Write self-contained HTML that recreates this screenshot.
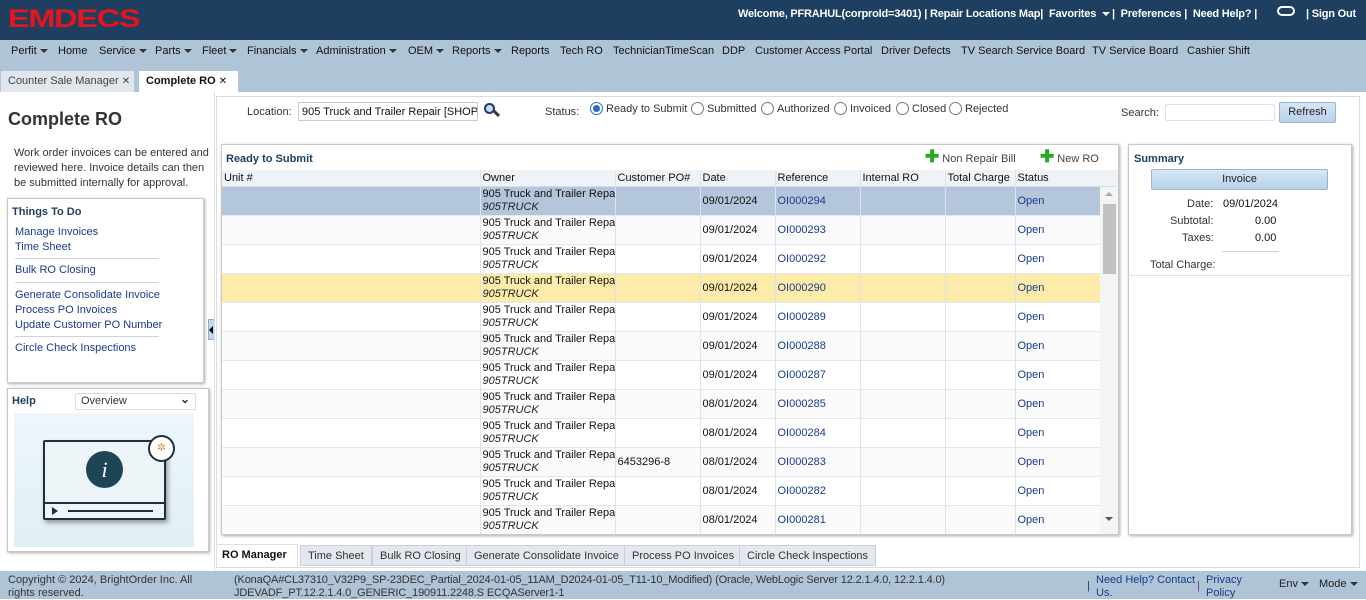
<!DOCTYPE html>
<html><head><meta charset="utf-8"><style>
*{box-sizing:border-box;margin:0;padding:0}
body{width:1366px;height:599px;overflow:hidden;font-family:"Liberation Sans",Tahoma,sans-serif;font-size:11px;color:#333;background:#fff;position:relative}
.a{position:absolute;white-space:nowrap}
#hdr{left:0;top:0;width:1366px;height:40px;background:#1e3f5f}
#nav{left:0;top:40px;width:1366px;height:52px;background:#b0c4d8}
#foot{left:0;top:571px;width:1366px;height:28px;background:#b0c4d8}
.nv{top:45px;font-size:11px;color:#111}
.tri{display:inline-block;width:0;height:0;border-left:4px solid transparent;border-right:4px solid transparent;border-top:4px solid #333;vertical-align:middle;margin-left:3px}
.wt{color:#fff;font-weight:bold;top:8px;font-size:11px;letter-spacing:-0.2px}
a,.lk{color:#1a3a8a}
.box{border:1px solid #c8c8c8;box-shadow:1px 1px 3px #aaa;background:#fff}
table{border-collapse:collapse;table-layout:fixed}
td,th{border-right:1px solid #dde3ea;padding:0 2px;font-weight:normal;text-align:left;overflow:hidden;white-space:nowrap;color:#111}
th{height:16px;background:#eef3f8;border-bottom:1px solid #d5dde6}
td{height:29px;border-bottom:1px solid #e4e8ec;vertical-align:middle}
tr.s td{background:#b4c6dc}
tr.y td{background:#fdeca9}
tr.g td{background:#fafafa}
.st{color:#1a3a8a}
.ow{line-height:13px}
.ow i{display:block;color:#222}
.bt{top:545px;height:21px;padding:4px 7px;border:1px solid #ccd;background:#e3e8ee;color:#333}
</style></head><body>
<div id="hdr" class="a"></div>
<div class="a" style="left:8px;top:5px;font-size:25px;font-weight:bold;color:#e8141c;letter-spacing:-1px;transform:scaleX(1.3);transform-origin:left">EMDECS</div>
<div class="a wt" style="left:738px">Welcome, PFRAHUL(corproId=3401) | Repair Locations Map|</div>
<div class="a wt" style="left:1049px">Favorites <span class="tri" style="border-top-color:#fff"></span></div>
<div class="a wt" style="left:1112px">| &nbsp;Preferences | &nbsp;Need Help? |</div>
<div class="a" style="left:1277px;top:6px;width:18px;height:10px;border:2px solid #fff;border-radius:5px"></div>
<div class="a wt" style="left:1306px">| Sign Out</div>
<div id="nav" class="a"></div>
<div class="a nv" style="left:11px">Perfit<span class="tri"></span></div>
<div class="a nv" style="left:58px">Home</div>
<div class="a nv" style="left:99px">Service<span class="tri"></span></div>
<div class="a nv" style="left:155px">Parts<span class="tri"></span></div>
<div class="a nv" style="left:202px">Fleet<span class="tri"></span></div>
<div class="a nv" style="left:247px">Financials<span class="tri"></span></div>
<div class="a nv" style="left:316px">Administration<span class="tri"></span></div>
<div class="a nv" style="left:408px">OEM<span class="tri"></span></div>
<div class="a nv" style="left:452px">Reports<span class="tri"></span></div>
<div class="a nv" style="left:511px">Reports</div>
<div class="a nv" style="left:560px">Tech RO</div>
<div class="a nv" style="left:613px">TechnicianTimeScan</div>
<div class="a nv" style="left:722px">DDP</div>
<div class="a nv" style="left:755px">Customer Access Portal</div>
<div class="a nv" style="left:881px">Driver Defects</div>
<div class="a nv" style="left:961px">TV Search Service Board</div>
<div class="a nv" style="left:1092px">TV Service Board</div>
<div class="a nv" style="left:1187px">Cashier Shift</div>
<div class="a" style="left:1px;top:71px;width:133px;height:21px;background:#dfe6ee;padding:4px 7px;color:#444">Counter Sale Manager <span style="font-size:10px">✕</span></div>
<div class="a" style="left:139px;top:71px;width:99px;height:21px;background:#fff;padding:4px 7px;font-weight:bold;color:#111">Complete RO <span style="font-size:10px;font-weight:normal">✕</span></div>

<div class="a" style="left:8px;top:109px;font-size:18px;font-weight:bold;color:#333">Complete RO</div>
<div class="a" style="left:14px;top:146px;line-height:15px;white-space:normal;width:198px">Work order invoices can be entered and reviewed here. Invoice details can then be submitted internally for approval.</div>
<div class="a box" style="left:7px;top:198px;width:197px;height:185px"></div>
<div class="a" style="left:12px;top:206px;font-weight:bold;color:#1e3f5f">Things To Do</div>
<div class="a lk" style="left:15px;top:225px;line-height:15px">Manage Invoices<br>Time Sheet</div>
<div class="a" style="left:15px;top:258px;width:144px;border-top:1px solid #ccd5df"></div>
<div class="a lk" style="left:15px;top:264px">Bulk RO Closing</div>
<div class="a" style="left:15px;top:282px;width:144px;border-top:1px solid #ccd5df"></div>
<div class="a lk" style="left:15px;top:288px;line-height:15px">Generate Consolidate Invoice<br>Process PO Invoices<br>Update Customer PO Number</div>
<div class="a" style="left:15px;top:336px;width:144px;border-top:1px solid #ccd5df"></div>
<div class="a lk" style="left:15px;top:342px">Circle Check Inspections</div>
<div class="a" style="left:208px;top:319px;width:7px;height:21px;background:#c4d6ec;border:1px solid #9ab"></div>
<div class="a" style="left:209px;top:326px;border-top:4px solid transparent;border-bottom:4px solid transparent;border-right:4px solid #000"></div>
<div class="a" style="left:214px;top:92px;width:1px;height:479px;background:#ddd"></div>
<div class="a box" style="left:7px;top:388px;width:202px;height:164px"></div>
<div class="a" style="left:12px;top:395px;font-weight:bold;color:#1e3f5f">Help</div>
<div class="a" style="left:75px;top:393px;width:121px;height:17px;border:1px solid #ddd;border-radius:2px;padding:1px 5px;color:#333">Overview<span style="position:absolute;right:5px;top:-2px;font-weight:bold;font-size:12px">⌄</span></div>
<div class="a" style="left:14px;top:413px;width:180px;height:134px;background:linear-gradient(#eef6fb,#dff0f6)"></div>
<div class="a" style="left:43px;top:440px;width:123px;height:80px;border:2px solid #1d2f3c;border-radius:2px;background:#edf5f9;box-shadow:2px 3px 5px #999"></div>
<div class="a" style="left:44px;top:502px;width:121px;height:2px;background:#1d2f3c"></div>
<div class="a" style="left:52px;top:507px;border-top:4px solid transparent;border-bottom:4px solid transparent;border-left:6px solid #1d2f3c"></div>
<div class="a" style="left:68px;top:510px;width:85px;height:2px;background:#1d2f3c"></div>
<div class="a" style="left:86px;top:451px;width:37px;height:37px;border-radius:50%;background:#1d4556;color:#fff;font-style:italic;font-size:22px;text-align:center;line-height:37px;font-family:'Liberation Serif',serif">i</div>
<div class="a" style="left:148px;top:435px;width:27px;height:27px;border-radius:50%;border:2px solid #1d2f3c;background:#fff;color:#e78b3a;font-size:11px;text-align:center;line-height:22px">✲</div>

<div class="a" style="left:216px;top:96px;width:1144px;height:472px;border:1px solid #d8dde3"></div>
<div class="a" style="left:247px;top:106px">Location:</div>
<div class="a" style="left:298px;top:102px;width:180px;height:19px;border:1px solid #ccc;padding:3px 3px;overflow:hidden;color:#111">905 Truck and Trailer Repair [SHOP]</div>
<div class="a" style="left:484px;top:103px;width:11px;height:11px;border:2px solid #336;border-radius:50%;background:#bfe0f5"></div>
<div class="a" style="left:493px;top:112px;width:7px;height:3px;background:#335;transform:rotate(45deg)"></div>
<div class="a" style="left:545px;top:106px">Status:</div>
<div class="a" style="left:590px;top:102px;width:13px;height:13px;border:1px solid #2a6bc4;border-radius:50%"><div style="margin:2px;width:7px;height:7px;border-radius:50%;background:#2a6bc4"></div></div>
<div class="a" style="left:606px;top:103px">Ready to Submit</div>
<div class="a" style="left:691px;top:102px;width:13px;height:13px;border:1px solid #777;border-radius:50%"></div>
<div class="a" style="left:707px;top:103px">Submitted</div>
<div class="a" style="left:761px;top:102px;width:13px;height:13px;border:1px solid #777;border-radius:50%"></div>
<div class="a" style="left:777px;top:103px">Authorized</div>
<div class="a" style="left:834px;top:102px;width:13px;height:13px;border:1px solid #777;border-radius:50%"></div>
<div class="a" style="left:850px;top:103px">Invoiced</div>
<div class="a" style="left:896px;top:102px;width:13px;height:13px;border:1px solid #777;border-radius:50%"></div>
<div class="a" style="left:912px;top:103px">Closed</div>
<div class="a" style="left:949px;top:102px;width:13px;height:13px;border:1px solid #777;border-radius:50%"></div>
<div class="a" style="left:965px;top:103px">Rejected</div>
<div class="a" style="left:1121px;top:107px">Search:</div>
<div class="a" style="left:1165px;top:104px;width:110px;height:17px;border:1px solid #dde;border-radius:2px"></div>
<div class="a" style="left:1279px;top:102px;width:57px;height:21px;border:1px solid #9bb3cc;border-radius:2px;background:linear-gradient(#d6e6f5,#b9d1ea);text-align:center;line-height:19px;color:#222">Refresh</div>

<div class="a box" style="left:221px;top:144px;width:898px;height:391px;overflow:hidden">
<div style="position:absolute;left:4px;top:8px;font-weight:bold;color:#1e3f5f">Ready to Submit</div>
<div style="position:absolute;left:703px;top:6px;color:#444"><b style="color:#2a2;font-size:17px;line-height:12px">✚</b> Non Repair Bill</div>
<div style="position:absolute;left:818px;top:6px;color:#444"><b style="color:#2a2;font-size:17px;line-height:12px">✚</b> New RO</div>
<table style="position:absolute;left:0;top:25px;width:878px">
<colgroup><col style="width:258px"><col style="width:135px"><col style="width:85px"><col style="width:75px"><col style="width:85px"><col style="width:85px"><col style="width:70px"><col style="width:85px"></colgroup>
<tr><th>Unit #</th><th>Owner</th><th>Customer PO#</th><th>Date</th><th>Reference</th><th>Internal RO</th><th>Total Charge</th><th>Status</th></tr>
<tr class="s"><td></td><td class="ow">905 Truck and Trailer Repair<i>905TRUCK</i></td><td></td><td>09/01/2024</td><td class="st">OI000294</td><td></td><td></td><td class="st">Open</td></tr>
<tr class="g"><td></td><td class="ow">905 Truck and Trailer Repair<i>905TRUCK</i></td><td></td><td>09/01/2024</td><td class="st">OI000293</td><td></td><td></td><td class="st">Open</td></tr>
<tr><td></td><td class="ow">905 Truck and Trailer Repair<i>905TRUCK</i></td><td></td><td>09/01/2024</td><td class="st">OI000292</td><td></td><td></td><td class="st">Open</td></tr>
<tr class="y"><td></td><td class="ow">905 Truck and Trailer Repair<i>905TRUCK</i></td><td></td><td>09/01/2024</td><td class="st">OI000290</td><td></td><td></td><td class="st">Open</td></tr>
<tr><td></td><td class="ow">905 Truck and Trailer Repair<i>905TRUCK</i></td><td></td><td>09/01/2024</td><td class="st">OI000289</td><td></td><td></td><td class="st">Open</td></tr>
<tr class="g"><td></td><td class="ow">905 Truck and Trailer Repair<i>905TRUCK</i></td><td></td><td>09/01/2024</td><td class="st">OI000288</td><td></td><td></td><td class="st">Open</td></tr>
<tr><td></td><td class="ow">905 Truck and Trailer Repair<i>905TRUCK</i></td><td></td><td>09/01/2024</td><td class="st">OI000287</td><td></td><td></td><td class="st">Open</td></tr>
<tr class="g"><td></td><td class="ow">905 Truck and Trailer Repair<i>905TRUCK</i></td><td></td><td>08/01/2024</td><td class="st">OI000285</td><td></td><td></td><td class="st">Open</td></tr>
<tr><td></td><td class="ow">905 Truck and Trailer Repair<i>905TRUCK</i></td><td></td><td>08/01/2024</td><td class="st">OI000284</td><td></td><td></td><td class="st">Open</td></tr>
<tr class="g"><td></td><td class="ow">905 Truck and Trailer Repair<i>905TRUCK</i></td><td>6453296-8</td><td>08/01/2024</td><td class="st">OI000283</td><td></td><td></td><td class="st">Open</td></tr>
<tr><td></td><td class="ow">905 Truck and Trailer Repair<i>905TRUCK</i></td><td></td><td>08/01/2024</td><td class="st">OI000282</td><td></td><td></td><td class="st">Open</td></tr>
<tr class="g"><td></td><td class="ow">905 Truck and Trailer Repair<i>905TRUCK</i></td><td></td><td>08/01/2024</td><td class="st">OI000281</td><td></td><td></td><td class="st">Open</td></tr>
</table>
<div style="position:absolute;left:878px;top:25px;width:19px;height:17px;background:#eef3f8;border-bottom:1px solid #d5dde6"></div>
<div style="position:absolute;left:878px;top:42px;width:19px;height:348px;background:#f4f4f4"></div>
<div style="position:absolute;left:881px;top:59px;width:13px;height:70px;background:#c1c1c1"></div>
<div style="position:absolute;left:883px;top:47px;border-left:4px solid transparent;border-right:4px solid transparent;border-bottom:4px solid #aaa"></div>
<div style="position:absolute;left:883px;top:372px;border-left:4px solid transparent;border-right:4px solid transparent;border-top:4px solid #555"></div>
</div>

<div class="a box" style="left:1128px;top:144px;width:224px;height:391px"></div>
<div class="a" style="left:1128px;top:275px;width:224px;border-top:1px solid #dde3ea"></div>
<div class="a" style="left:1134px;top:153px;font-weight:bold;color:#1e3f5f">Summary</div>
<div class="a" style="left:1151px;top:169px;width:177px;height:21px;border:1px solid #9bb3cc;border-radius:2px;background:linear-gradient(#d6e6f5,#b9d1ea);text-align:center;line-height:19px;color:#222">Invoice</div>
<div class="a" style="left:1187px;top:198px">Date:</div><div class="a" style="left:1223px;top:198px;color:#111">09/01/2024</div>
<div class="a" style="left:1170px;top:215px">Subtotal:</div><div class="a" style="left:1255px;top:215px;color:#111">0.00</div>
<div class="a" style="left:1182px;top:232px">Taxes:</div><div class="a" style="left:1255px;top:232px;color:#111">0.00</div>
<div class="a" style="left:1222px;top:251px;width:57px;border-top:1px solid #ccd5df"></div>
<div class="a" style="left:1150px;top:259px">Total Charge:</div>

<div class="a" style="left:216px;top:544px;width:82px;height:22px;background:#fff;border:1px solid #dde;border-bottom:none;padding:4px 5px;font-weight:bold;color:#111">RO Manager</div>
<div class="a bt" style="left:300px">Time Sheet</div>
<div class="a bt" style="left:372px">Bulk RO Closing</div>
<div class="a bt" style="left:466px">Generate Consolidate Invoice</div>
<div class="a bt" style="left:624px">Process PO Invoices</div>
<div class="a bt" style="left:739px">Circle Check Inspections</div>

<div id="foot" class="a"></div>
<div class="a" style="left:8px;top:574px;line-height:13px;color:#333">Copyright © 2024, BrightOrder Inc. All<br>rights reserved.</div>
<div class="a" style="left:234px;top:574px;line-height:13px;color:#333;letter-spacing:-0.15px">(KonaQA#CL37310_V32P9_SP-23DEC_Partial_2024-01-05_11AM_D2024-01-05_T11-10_Modified) (Oracle, WebLogic Server 12.2.1.4.0, 12.2.1.4.0)<br>JDEVADF_PT.12.2.1.4.0_GENERIC_190911.2248.S ECQAServer1-1</div>
<div class="a" style="left:1087px;top:580px;color:#1a3a8a">|</div>
<div class="a lk" style="left:1096px;top:574px;line-height:13px">Need Help? Contact<br>Us.</div>
<div class="a" style="left:1197px;top:580px;color:#639">|</div>
<div class="a lk" style="left:1206px;top:574px;line-height:13px">Privacy<br>Policy</div>
<div class="a" style="left:1279px;top:578px;color:#222">Env<span class="tri"></span></div>
<div class="a" style="left:1319px;top:578px;color:#222">Mode<span class="tri"></span></div>
</body></html>
